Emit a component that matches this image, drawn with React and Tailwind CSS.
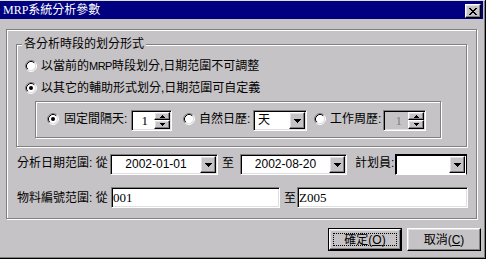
const sunken =
  "border border-t-[#808080] border-l-[#808080] border-r-white border-b-white shadow-[inset_1px_1px_0_#000,inset_-1px_-1px_0_#dfdfdf] p-[1px]";
const raised =
  "border border-t-white border-l-white border-r-black border-b-black shadow-[inset_-1px_-1px_0_#808080,inset_1px_1px_0_#dfdfdf]";
const etched = "border border-[#808080] shadow-[1px_1px_0_#fff,inset_1px_1px_0_#fff]";

function Radio({ checked }) {
  return (
    <svg width="12" height="12" viewBox="0 0 12 12" className="shrink-0">
      <circle cx="6" cy="6" r="4.5" fill="#fff" />
      <path d="M2.11 9.89A5.5 5.5 0 0 1 9.89 2.11" fill="none" stroke="#808080" />
      <path d="M9.89 2.11A5.5 5.5 0 0 1 2.11 9.89" fill="none" stroke="#fff" />
      <path d="M2.82 9.18A4.5 4.5 0 0 1 9.18 2.82" fill="none" stroke="#000" />
      <path d="M9.18 2.82A4.5 4.5 0 0 1 2.82 9.18" fill="none" stroke="#dfdfdf" />
      {checked && <circle cx="6" cy="6" r="2" fill="#000" />}
    </svg>
  );
}

function ArrowDown() {
  return (
    <svg width="7" height="4" viewBox="0 0 7 4">
      <path d="M0 0h7v1H0zM1 1h5v1H1zM2 2h3v1H2zM3 3h1v1H3z" fill="#000" />
    </svg>
  );
}

function SmallArrow({ up }) {
  return (
    <svg width="5" height="3" viewBox="0 0 5 3">
      <path
        d={up ? "M2 0h1v1H2zM1 1h3v1H1zM0 2h5v1H0z" : "M0 0h5v1H0zM1 1h3v1H1zM2 2h1v1H2z"}
        fill="#000"
      />
    </svg>
  );
}

function Spin({ value, disabled, width }) {
  return (
    <div className={`${width} h-[21px] shrink-0 flex ${sunken} ${disabled ? "bg-[#c6c3c6] text-[#808080]" : "bg-white"}`}>
      <div className="flex-1 text-right pr-[6px] leading-[17px] font-['Liberation_Serif',serif] text-[13px]">{value}</div>
      <div className="w-[16px] flex flex-col">
        <div className={`h-[8px] flex items-center justify-center bg-[#c6c3c6] ${raised}`}>
          <SmallArrow up />
        </div>
        <div className={`h-[9px] flex items-center justify-center bg-[#c6c3c6] ${raised}`}>
          <SmallArrow />
        </div>
      </div>
    </div>
  );
}

function Combo({ value, width, center, focused }) {
  const frame = focused
    ? "border border-black border-b-white shadow-[inset_1px_1px_0_#000] p-[1px]"
    : sunken;
  return (
    <div className={`${width} h-[21px] shrink-0 flex bg-white ${frame}`}>
      <div className={`flex-1 leading-[17px] ${center ? "text-center" : "pl-[3px]"}`}>{value}</div>
      <div className={`w-[16px] h-[17px] flex items-center justify-center bg-[#c6c3c6] ${raised}`}>
        <ArrowDown />
      </div>
    </div>
  );
}

function Field({ value, width }) {
  return (
    <div className={`${width} h-[21px] shrink-0 bg-white leading-[17px] pl-[1px] font-['Liberation_Serif',serif] text-[13px] ${sunken}`}>
      {value}
    </div>
  );
}

export default function App() {
  return (
    <div className="w-[486px] h-[259px] bg-[#c6c3c6] text-black text-[12px] font-['Liberation_Sans','Noto_Sans_CJK_TC',sans-serif] border-r border-b border-black shadow-[inset_-1px_-1px_0_#808080] overflow-hidden flex flex-col">
      <div className="h-px w-[485px] bg-[#dfdfdf]" />
      <div className="w-[483px] h-[18px] bg-[#000080] flex items-start justify-between pl-[3px] pr-[2px]">
        <span className="text-white leading-[18px] font-['Liberation_Serif','Noto_Sans_CJK_TC',serif] text-[12px]">
          MRP系統分析參數
        </span>
        <button className={`mt-[3px] w-[16px] h-[14px] flex items-center justify-center bg-[#c6c3c6] ${raised}`}>
          <svg width="8" height="7" viewBox="0 0 8 7">
            <path
              d="M0 0h2v1H0zM6 0h2v1H6zM1 1h2v1H1zM5 1h2v1H5zM2 2h4v1H2zM3 3h2v1H3zM2 4h4v1H2zM1 5h2v1H1zM5 5h2v1H5zM0 6h2v1H0zM6 6h2v1H6z"
              fill="#000"
            />
          </svg>
        </button>
      </div>

      <div className="pl-[6px] pt-[10px]">
        {/* main panel */}
        <div className={`w-[471px] h-[190px] pl-[9px] pt-[14px] ${etched}`}>
          <div className={`relative w-[451px] h-[103px] flex flex-col ${etched}`}>
            <span className="absolute left-[5px] -top-[8px] bg-[#c6c3c6] px-[2px] leading-[14px]">
              各分析時段的划分形式
            </span>
            <div className="mt-[13px] h-[16px] pl-[8px] flex items-center gap-[4px]">
              <Radio />
              <span className="mb-[1px]">
                以當前的<span className="text-[11px] tracking-[-0.5px]">MRP</span>時段划分,日期范圍不可調整
              </span>
            </div>
            <div className="mt-[6px] h-[16px] pl-[8px] flex items-center gap-[4px]">
              <Radio checked />
              <span className="mb-[1px]">以其它的輔助形式划分,日期范圍可自定義</span>
            </div>
            <div className={`mt-[5px] ml-[18px] w-[406px] h-[37px] pt-[8px] ${etched}`}>
              <div className="h-[21px] flex items-center">
                <div className="ml-[11px] mb-[4px]">
                  <Radio checked />
                </div>
                <span className="ml-[5px] w-[67px] mb-[4px]">固定間隔天:</span>
                <Spin value="1" width="w-[41px]" />
                <div className="ml-[11px] mb-[4px]">
                  <Radio />
                </div>
                <span className="ml-[4px] w-[54px] mb-[4px]">自然日歷:</span>
                <Combo value="天" width="w-[54px]" />
                <div className="ml-[7px] mb-[4px]">
                  <Radio />
                </div>
                <span className="ml-[4px] w-[53px] mb-[4px]">工作周歷:</span>
                <Spin value="1" width="w-[43px]" disabled />
              </div>
            </div>
          </div>

          <div className="mt-[7px] pl-[1px] h-[21px] flex items-center">
            <span className="w-[93px] mb-[4px]">分析日期范圍: 從</span>
            <Combo value="2002-01-01" width="w-[108px]" center />
            <span className="ml-[4px] w-[12px] mb-[4px]">至</span>
            <div className="ml-[6px]">
              <Combo value="2002-08-20" width="w-[107px]" center />
            </div>
            <span className="ml-[8px] w-[40px] mb-[4px]">計划員:</span>
            <Combo value="" width="w-[72px]" focused />
          </div>

          <div className="mt-[12px] pl-[1px] h-[21px] flex items-center">
            <span className="w-[94px]">物料編號范圍: 從</span>
            <Field value="001" width="w-[169px]" />
            <span className="ml-[4px] w-[12px]">至</span>
            <div className="ml-[1px]">
              <Field value="Z005" width="w-[171px]" />
            </div>
          </div>
        </div>

        <div className="mt-[9px] ml-[322px] flex gap-[5px]">
          <div className="w-[74px] h-[23px] border border-black">
            <div className={`w-full h-full bg-[#c6c3c6] p-[3px] ${raised}`}>
              <div className="w-full h-full border border-dotted border-black flex items-center justify-center leading-none">
                確定(<u>O</u>)
              </div>
            </div>
          </div>
          <button className={`w-[74px] h-[23px] bg-[#c6c3c6] flex items-center justify-center leading-none ${raised}`}>
            取消(<u>C</u>)
          </button>
        </div>
      </div>
    </div>
  );
}
